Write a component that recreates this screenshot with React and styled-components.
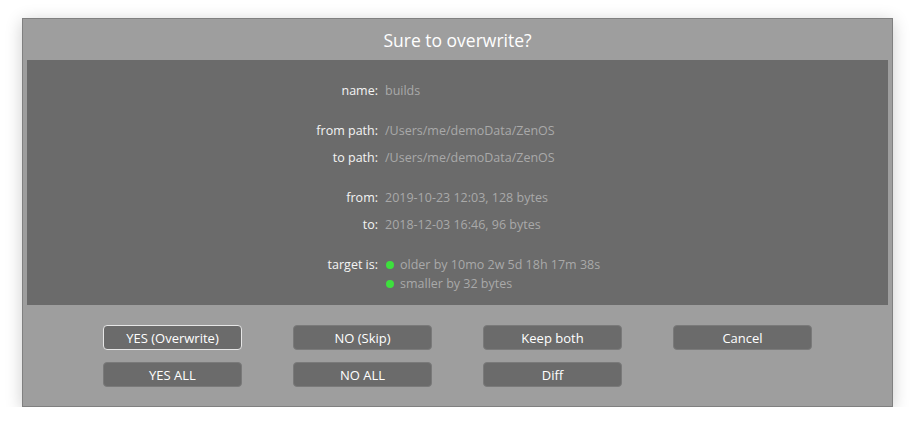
import React from "react";
import styled, { createGlobalStyle } from "styled-components";

const Global = createGlobalStyle`
  html, body { margin: 0; padding: 0; background: #ffffff; }
  body { font-family: "Open Sans", "DejaVu Sans", sans-serif; }
  #root { padding: 18px 0 0 22px; }
`;

const Dialog = styled.div`
  box-sizing: border-box;
  width: 871px;
  height: 389px;
  background: #9e9e9e;
  border: 1px solid #808080;
  box-shadow: 0 3px 16px rgba(0, 0, 0, 0.2);
  display: flex;
  flex-direction: column;
  padding: 0 4px;
`;

const Title = styled.div`
  height: 41px;
  display: flex;
  align-items: center;
  justify-content: center;
  color: #ffffff;
  font-size: 17.5px;
`;

const Panel = styled.div`
  background: #6b6b6b;
  height: 245px;
  box-sizing: border-box;
  padding-top: 17px;
  display: flex;
  flex-direction: column;
`;

const Group = styled.div`
  display: flex;
  flex-direction: column;
  & + & { margin-top: 13px; }
`;

const Field = styled.div`
  display: grid;
  grid-template-columns: 351px 1fr;
  column-gap: 7px;
  font-size: 12.5px;
  line-height: 27px;
`;

const Label = styled.div`
  text-align: right;
  color: #f4f4f4;
  font-weight: 500;
`;

const Value = styled.div`
  color: #a9a9a9;
`;

const Notes = styled.div`
  padding-top: 4px;
  line-height: 19px;
  display: flex;
  flex-direction: column;
`;

const Note = styled.div`
  display: flex;
  align-items: center;
  gap: 6px;
  color: #a9a9a9;
`;

const Dot = styled.span`
  width: 8px;
  height: 8px;
  margin-left: 1px;
  border-radius: 50%;
  background: #3ee03e;
  flex: none;
`;

const Buttons = styled.div`
  display: grid;
  grid-template-columns: repeat(4, 139px);
  column-gap: 51px;
  row-gap: 12px;
  justify-content: center;
  padding-top: 20px;
`;

const Button = styled.button`
  box-sizing: border-box;
  height: 25px;
  padding: 0;
  border-radius: 4px;
  background: #6b6b6b;
  border: 1px solid ${(p) => (p.$focused ? "#e6e6e6" : "#7a7a7a")};
  color: #ffffff;
  font-family: "Open Sans", "DejaVu Sans", sans-serif;
  font-size: 13px;
  font-weight: 500;
  cursor: pointer;
`;

const groups = [
  [["name:", "builds"]],
  [
    ["from path:", "/Users/me/demoData/ZenOS"],
    ["to path:", "/Users/me/demoData/ZenOS"],
  ],
  [
    ["from:", "2019-10-23 12:03, 128 bytes"],
    ["to:", "2018-12-03 16:46, 96 bytes"],
  ],
];

const buttons = [
  ["YES (Overwrite)", true],
  ["NO (Skip)"],
  ["Keep both"],
  ["Cancel"],
  ["YES ALL"],
  ["NO ALL"],
  ["Diff"],
];

export default function App() {
  return (
    <>
      <Global />
      <Dialog>
        <Title>Sure to overwrite?</Title>
        <Panel>
          {groups.map((g, i) => (
            <Group key={i}>
              {g.map(([l, v]) => (
                <Field key={l}>
                  <Label>{l}</Label>
                  <Value>{v}</Value>
                </Field>
              ))}
            </Group>
          ))}
          <Group>
            <Field>
              <Label>target is:</Label>
              <Notes>
                <Note>
                  <Dot />
                  older by 10mo 2w 5d 18h 17m 38s
                </Note>
                <Note>
                  <Dot />
                  smaller by 32 bytes
                </Note>
              </Notes>
            </Field>
          </Group>
        </Panel>
        <Buttons>
          {buttons.map(([t, f]) => (
            <Button key={t} $focused={f}>
              {t}
            </Button>
          ))}
        </Buttons>
      </Dialog>
    </>
  );
}
